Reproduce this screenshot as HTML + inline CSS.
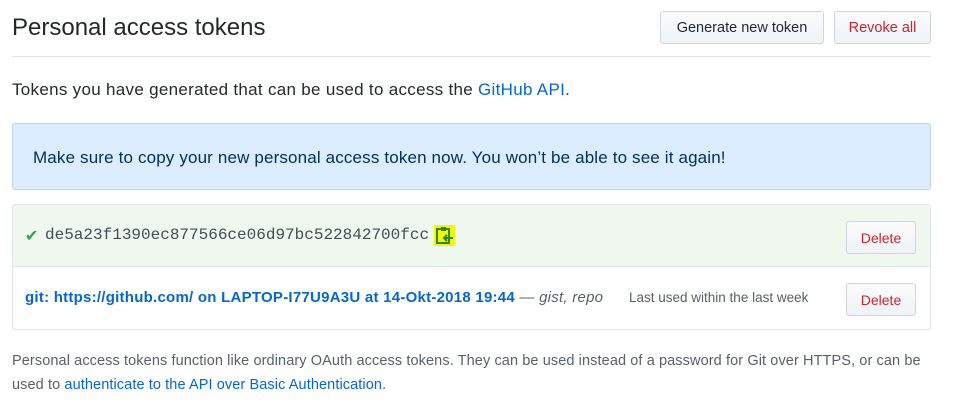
<!DOCTYPE html>
<html><head><meta charset="utf-8"><style>
*{box-sizing:border-box;margin:0;padding:0}
body{width:965px;height:419px;background:#fff;font-family:"Liberation Sans",sans-serif;color:#24292e;position:relative;overflow:hidden}
.a{position:absolute;white-space:nowrap}
.btn{position:absolute;border:1px solid #d1d5da;border-radius:3px;background:linear-gradient(#fafbfc,#eff3f6);font-size:14px;display:flex;align-items:center;justify-content:center}
a{color:#0366d6;text-decoration:none}
</style></head><body>
<div class="a" style="left:12px;top:14px;font-size:24px;font-weight:400">Personal access tokens</div>
<div class="btn" style="left:660px;top:11px;width:164px;height:33px;color:#24292e;font-size:14.5px">Generate new token</div>
<div class="btn" style="left:834px;top:11px;width:97px;height:33px;color:#cb2431;font-size:14.5px">Revoke all</div>
<div class="a" style="left:12px;top:56px;width:919px;height:1px;background:#e1e4e8"></div>
<div class="a" style="left:12px;top:80px;font-size:17px;letter-spacing:0.3px">Tokens you have generated that can be used to access the <a>GitHub API</a>.</div>
<div class="a" style="left:12px;top:123px;width:919px;height:67px;background:#dbedff;border:1px solid #c0d3eb;border-radius:3px;font-size:17px;letter-spacing:0.15px;padding:24px 0 0 20px;color:#032f62">Make sure to copy your new personal access token now. You won’t be able to see it again!</div>
<div class="a" style="left:12px;top:204px;width:919px;height:126px;border:1px solid #e1e4e8;border-radius:3px;overflow:hidden">
 <div style="height:62px;background:#f0f7ef;border-bottom:1px solid #e1e4e8;position:relative">
  <div class="a" style="left:12px;top:21px;color:#28a745;font-size:16px">✔</div>
  <div class="a" style="left:32px;top:21px;font-family:'Liberation Mono',monospace;font-size:16px;color:#444d56">de5a23f1390ec877566ce06d97bc522842700fcc</div>
  <div class="a" style="left:421px;top:20px;width:21px;height:21px;background:#f6f600"><svg width="21" height="21" viewBox="0 0 21 21"><rect x="3" y="4" width="12" height="14" fill="none" stroke="#2a8a2a" stroke-width="2"/><rect x="7" y="2" width="5" height="4" fill="#2a8a2a"/><path d="M10 13h9M13 10l-3 3 3 3" stroke="#2a8a2a" stroke-width="2" fill="none"/></svg></div>
  <div class="btn" style="left:833px;top:16px;width:70px;height:33px;color:#cb2431">Delete</div>
 </div>
 <div style="position:relative;height:63px">
  <div class="a" style="left:12px;top:22px;font-size:15px;letter-spacing:0.25px;color:#0366d6;font-weight:bold">git: https://github.com/ on LAPTOP-I77U9A3U at 14-Okt-2018 19:44 <span style="color:#586069;font-weight:normal">— <i>gist, repo</i></span></div>
  <div class="a" style="left:616px;top:23px;font-size:13.5px;color:#586069">Last used within the last week</div>
  <div class="btn" style="left:833px;top:16px;width:70px;height:33px;color:#cb2431">Delete</div>
 </div>
</div>
<div class="a" style="left:12px;top:349px;width:910px;white-space:normal;font-size:14.5px;letter-spacing:0.1px;line-height:24px;color:#586069">Personal access tokens function like ordinary OAuth access tokens. They can be used instead of a password for Git over HTTPS, or can be used to <a>authenticate to the API over Basic Authentication</a>.</div>
</body></html>
